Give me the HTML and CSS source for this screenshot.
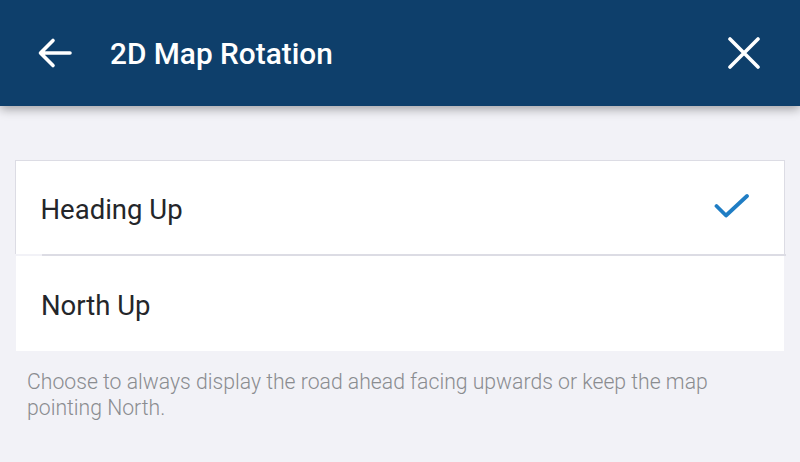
FILE: index.html
```html
<!DOCTYPE html>
<html>
<head>
<meta charset="utf-8">
<link rel="stylesheet" href="styles.css">
</head>
<body>
<header class="appbar">
  <button class="icon-btn back" aria-label="Back">
    <svg width="36" height="32" viewBox="0 0 36 32"><path d="M33 16H4M16 3.5L3.5 16 16 28.5" fill="none" stroke="#fff" stroke-width="3.6" stroke-linecap="round" stroke-linejoin="round"/></svg>
  </button>
  <h1 class="title">2D Map Rotation</h1>
  <button class="icon-btn close" aria-label="Close">
    <svg width="32" height="32" viewBox="0 0 32 32"><path d="M2 2L30 30M30 2L2 30" fill="none" stroke="#fff" stroke-width="3.6" stroke-linecap="round"/></svg>
  </button>
</header>
<main class="content">
  <ul class="options">
    <li class="option selected"><span>Heading Up</span>
      <svg class="check" width="36" height="28" viewBox="0 0 36 28"><path d="M2.5 14L12 23.5 33 4" fill="none" stroke="#1f7dc4" stroke-width="3.8" stroke-linecap="round" stroke-linejoin="round"/></svg>
    </li>
    <li class="option"><span>North Up</span></li>
  </ul>
  <p class="hint">Choose to always display the road ahead facing upwards or keep the map pointing North.</p>
</main>
</body>
</html>
```
FILE: styles.css
```css
* { box-sizing: border-box; }
html, body { margin: 0; padding: 0; }
body {
  width: 800px;
  height: 462px;
  background: #f2f2f7;
  font-family: Roboto, "Noto Sans", sans-serif;
  overflow: hidden;
}
.appbar {
  height: 106px;
  background: #0e3f6b;
  display: flex;
  align-items: center;
  padding: 0 38px 0 37px;
  box-shadow: 0 3px 10px rgba(0,0,0,0.35);
  position: relative;
  z-index: 1;
}
.icon-btn {
  background: none;
  border: 0;
  padding: 0;
  display: flex;
  align-items: center;
  justify-content: center;
}
.back { width: 36px; height: 32px; }
.title {
  margin: 0 0 0 37px;
  flex: 1;
  color: #fff;
  font-size: 29.8px;
  font-weight: 500;
  letter-spacing: 0;
}
.close { width: 32px; height: 32px; margin-right: 2px; }
.content { padding: 54px 15px 0 15px; }
.options { list-style: none; margin: 0; padding: 0; }
.option {
  display: flex;
  align-items: center;
  justify-content: space-between;
  height: 96px;
  background: #fff;
  padding: 0 33px 0 25px;
  color: #24262a;
  font-size: 27.5px;
  margin: 0 1px;
}
.option.selected {
  height: 94px;
  margin: 0;
  border: 1.5px solid #dcdce4;
  border-bottom: 0;
  padding-left: 24.5px;
  padding-right: 34px;
  position: relative;
}
.option > span { margin-top: 4px; }
.option.selected::after {
  content: "";
  position: absolute;
  left: 26px;
  right: -1.5px;
  bottom: -2px;
  height: 2.5px;
  background: #dcdce4;
}
.option.selected + .option { margin-top: 2px; height: 95px; }
.check { margin-top: -4px; }
.hint {
  margin: 18px 0 0 12px;
  color: #8a8c90;
  font-size: 21.2px;
  font-weight: 300;
  line-height: 26px;
  padding-right: 50px;
}
```
